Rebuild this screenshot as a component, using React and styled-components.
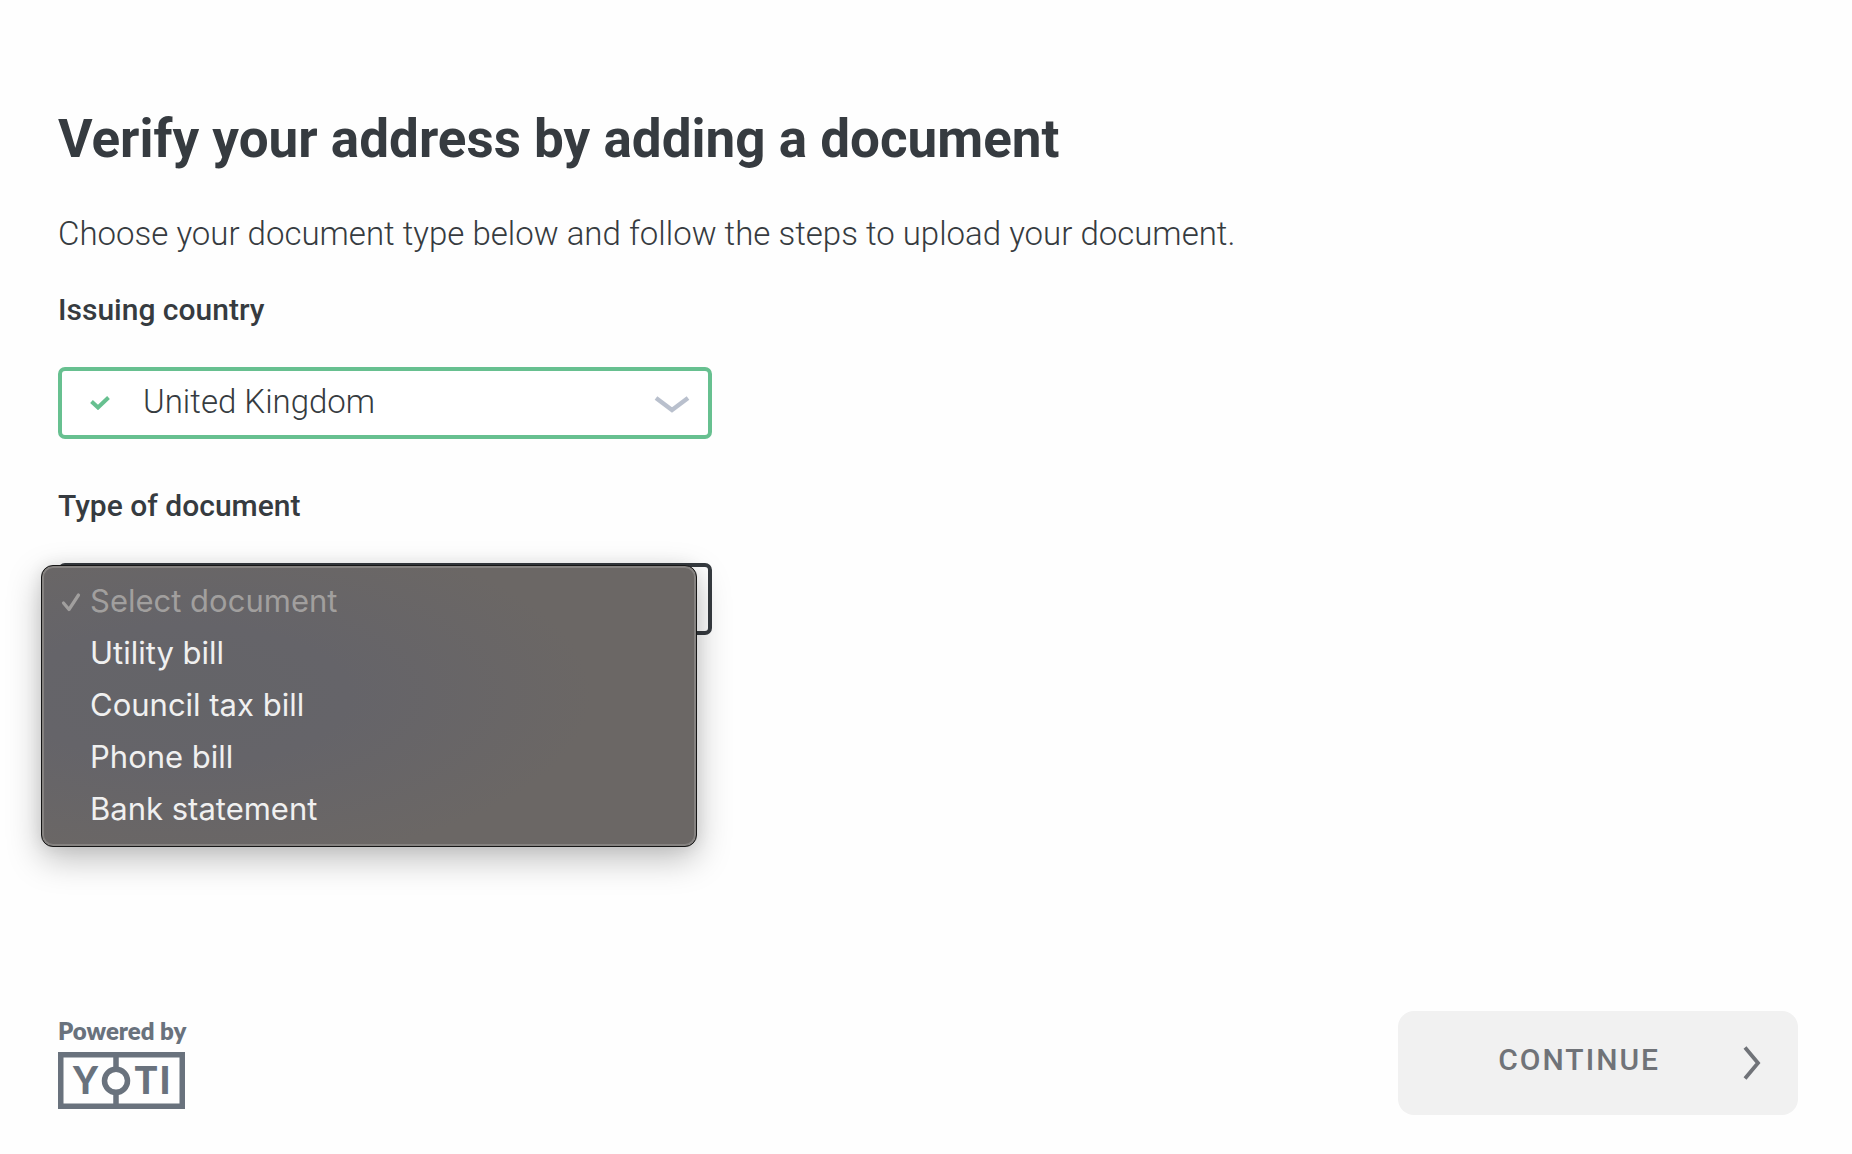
import React from "react";
import styled, { createGlobalStyle } from "styled-components";

const color = {
  ink: "#363b40",
  green: "#67c090",
  chevron: "#b9c0cd",
  brand: "#69727d",
  disabledText: "#707378",
  disabledBg: "#f1f1f1",
};

const GlobalStyle = createGlobalStyle`
  *, *::before, *::after { box-sizing: border-box; }
  body {
    margin: 0;
    background: #fefefe;
    color: ${color.ink};
    font-family: Roboto, "Liberation Sans", sans-serif;
  }
`;

const Page = styled.div`
  display: flex;
  flex-direction: column;
  min-height: 100vh;
  padding: 108px 54px 39px 58px;
`;

const Content = styled.main`
  display: flex;
  flex-direction: column;
  flex: 1;
`;

const Title = styled.h1`
  margin: 0;
  font-size: 53px;
  line-height: 62px;
  font-weight: 700;
`;

const Intro = styled.p`
  margin: 42px 0 0;
  font-size: 33px;
  line-height: 44px;
  font-weight: 300;
`;

const Field = styled.div`
  display: flex;
  flex-direction: column;
  gap: 38px;
  margin-top: ${(p) => p.$top}px;
  width: 100%;
  max-width: 654px;
`;

const Label = styled.label`
  font-size: 30px;
  line-height: 38px;
  font-weight: 500;
`;

const SelectWrap = styled.div`
  position: relative;
`;

const Select = styled.select`
  display: block;
  appearance: none;
  width: 100%;
  height: 72px;
  padding: 0 72px 4px 81px;
  border: 4px solid ${(p) => (p.$valid ? color.green : color.ink)};
  border-radius: 7px;
  background: #ffffff;
  color: ${color.ink};
  font-family: inherit;
  font-size: 33px;
  font-weight: 300;
  outline: none;
`;

const FieldIcon = styled.svg`
  position: absolute;
  top: 50%;
  ${(p) => p.$side}: ${(p) => p.$inset}px;
  transform: translateY(-50%);
  pointer-events: none;
`;

const Menu = styled.ul`
  position: absolute;
  top: 2px;
  left: -17px;
  right: 15px;
  margin: 0;
  padding: 9px 0 11px;
  list-style: none;
  border: 1px solid #161616;
  border-radius: 12px;
  background:
    radial-gradient(ellipse 62% 62% at 22% 46%, #646468 0%, #656469 40%, rgba(106, 102, 101, 0) 100%),
    #6b6765;
  box-shadow: inset 0 0 0 2px #858280, 0 12px 34px rgba(0, 0, 0, 0.26), 0 0 16px rgba(0, 0, 0, 0.08);
`;

const Option = styled.li`
  display: flex;
  align-items: center;
  height: 52px;
  padding-left: 18px;
  color: ${(p) => (p.$muted ? "#a19f9e" : "#f0f0f0")};
  font-family: Inter, "Liberation Sans", sans-serif;
  font-size: 31px;
  line-height: 52px;
`;

const Tick = styled.span`
  display: flex;
  flex: none;
  width: 30px;
`;

const Footer = styled.footer`
  display: flex;
  align-items: center;
  justify-content: space-between;
`;

const Brand = styled.a`
  display: flex;
  flex-direction: column;
  gap: 8px;
  color: ${color.brand};
  text-decoration: none;
  font-family: Lato, "Liberation Sans", sans-serif;
  font-size: 24px;
  line-height: 26px;
  font-weight: 800;
`;

const LogoLetter = styled.text`
  font-family: Lato, "Liberation Sans", sans-serif;
  font-size: 38px;
  font-weight: 900;
  text-anchor: middle;
`;

const ContinueButton = styled.button`
  display: flex;
  align-items: center;
  justify-content: flex-end;
  gap: 83px;
  width: 400px;
  height: 104px;
  padding: 0 37px 0 0;
  border: 0;
  border-radius: 16px;
  background: ${color.disabledBg};
  color: ${color.disabledText};
  font-family: inherit;
  font-size: 30px;
  line-height: 36px;
  font-weight: 500;
  letter-spacing: 2px;
`;

const ButtonText = styled.span`
  padding-bottom: 6px;
`;

const documents = ["Utility bill", "Council tax bill", "Phone bill", "Bank statement"];

function YotiLogo() {
  return (
    <svg width="127" height="57" viewBox="0 0 127 57" role="img" aria-label="Yoti" fill="currentColor">
      <rect x="2.75" y="2.75" width="121.5" height="51.5" fill="none" stroke="currentColor" strokeWidth="5.5" />
      <path d="M58 3v13M58 42v12" stroke="currentColor" strokeWidth="5.5" />
      <circle cx="58" cy="28.8" r="11.5" fill="none" stroke="currentColor" strokeWidth="5.5" />
      <LogoLetter x="27.5" y="42">Y</LogoLetter>
      <LogoLetter x="88" y="42">T</LogoLetter>
      <LogoLetter x="107" y="42">I</LogoLetter>
    </svg>
  );
}

export default function App() {
  return (
    <>
      <GlobalStyle />
      <Page>
        <Content>
          <Title>Verify your address by adding a document</Title>
          <Intro>Choose your document type below and follow the steps to upload your document.</Intro>

          <Field $top={35}>
            <Label htmlFor="country">Issuing country</Label>
            <SelectWrap>
              <Select id="country" $valid defaultValue="gb">
                <option value="gb">United Kingdom</option>
              </Select>
              <FieldIcon $side="left" $inset={32} width="20" height="14" viewBox="0 0 20 14">
                <path d="M1.5 5.5 8 11.5 18.5 1.5" fill="none" stroke={color.green} strokeWidth="4" />
              </FieldIcon>
              <FieldIcon $side="right" $inset={22} width="36" height="20" viewBox="0 0 36 20">
                <path d="M2 5 18 17 34 5" fill="none" stroke={color.chevron} strokeWidth="4.4" />
              </FieldIcon>
            </SelectWrap>
          </Field>

          <Field $top={48}>
            <Label htmlFor="document">Type of document</Label>
            <SelectWrap>
              <Select id="document" defaultValue="">
                <option value="" />
                {documents.map((name) => (
                  <option key={name}>{name}</option>
                ))}
              </Select>
              <Menu role="listbox" aria-label="Type of document">
                <Option role="option" aria-selected="true" aria-disabled="true" $muted>
                  <Tick>
                    <svg width="22" height="24" viewBox="0 0 22 24" fill="none" stroke="currentColor" strokeWidth="3.2" strokeLinecap="round" strokeLinejoin="round">
                      <path d="M3.5 14 9 20.5 18.5 6" />
                    </svg>
                  </Tick>
                  Select document
                </Option>
                {documents.map((name) => (
                  <Option key={name} role="option" aria-selected="false">
                    <Tick />
                    {name}
                  </Option>
                ))}
              </Menu>
            </SelectWrap>
          </Field>
        </Content>

        <Footer>
          <Brand href="#yoti">
            Powered by
            <YotiLogo />
          </Brand>
          <ContinueButton type="button" disabled>
            <ButtonText>CONTINUE</ButtonText>
            <svg width="18" height="36" viewBox="0 0 18 36" fill="none" stroke="currentColor" strokeWidth="3.8">
              <path d="M2 2.5 15 18 2 33.5" />
            </svg>
          </ContinueButton>
        </Footer>
      </Page>
    </>
  );
}
